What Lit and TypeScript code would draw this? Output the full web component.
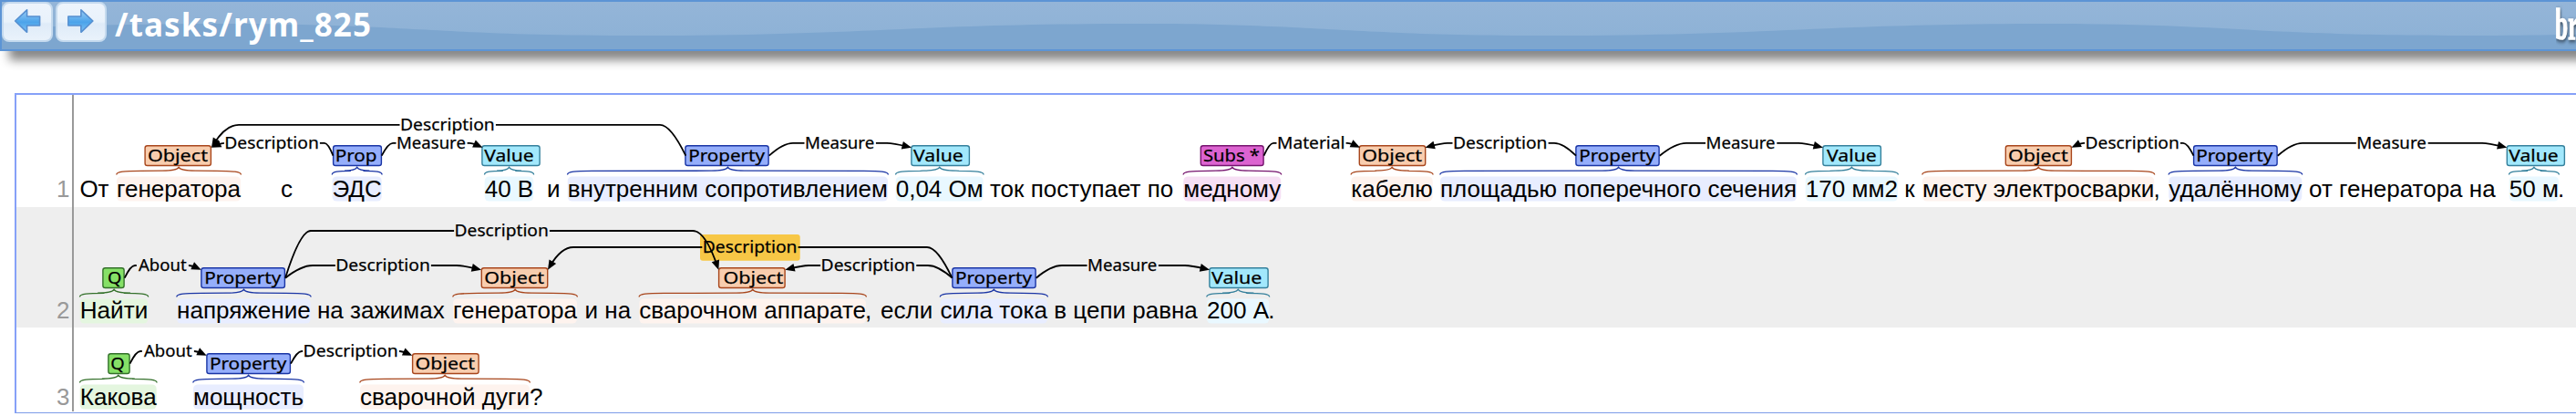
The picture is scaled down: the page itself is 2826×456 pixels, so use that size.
import { LitElement, html, svg, css } from "lit";
import { customElement, property } from "lit/decorators.js";

type Kind = "object" | "property" | "value" | "subs" | "question";

/** label, kind, box left/right, label ink left/right, span left/right, annotated text */
type Entity = [string, Kind, number, number, number, number, number, number, string];

/** plain text and its start */
type Plain = [number, string];

interface Arc {
  label: string;
  y: number;
  /** label ink extent */
  l0: number;
  l1: number;
  /** source edge and the x where its curve becomes flat */
  src: number;
  srcFlat: number;
  /** target edge and the x where its curve becomes flat */
  dst: number;
  dstFlat: number;
  marked?: boolean;
}

interface Sentence {
  no: number;
  top: number;
  height: number;
  box: number;
  base: number;
  shaded: boolean;
  entities: Entity[];
  plain: Plain[];
  arcs: Arc[];
}

const arc = (
  label: string, y: number, l0: number, l1: number,
  src: number, srcFlat: number, dst: number, dstFlat: number, marked = false,
): Arc => ({ label, y, l0, l1, src, srcFlat, dst, dstFlat, marked });

const FILL: Record<Kind, [string, string, string]> = {
  object: ["#f8cdae", "#a8461c", "#fef3ee"],
  property: ["#95aefb", "#1a35a5", "#e8edff"],
  value: ["#a2e8fc", "#35809c", "#e9f8ff"],
  subs: ["#dc63d0", "#75146e", "#f6dff4"],
  question: ["#86e067", "#33702a", "#e4f6df"],
};

const SENTENCES: Sentence[] = [
  {
    no: 1, top: 104, height: 123, box: 159, base: 216, shaded: false,
    entities: [
      ["Object", "object", 158.5, 232, 163, 227, 128, 264, "генератора"],
      ["Prop", "property", 365, 419, 369.5, 412.5, 364.5, 418.7, "ЭДС"],
      ["Value", "value", 528.3, 592.7, 531.3, 584.7, 531.7, 585.2, "40 В"],
      ["Property", "property", 751.3, 843.7, 757, 839, 622.7, 974, "внутренним сопротивлением"],
      ["Value", "value", 999.3, 1064, 1002, 1055.7, 982.7, 1078.7, "0,04 Ом"],
      ["Subs *", "subs", 1316.7, 1386.7, 1321, 1381, 1298.3, 1405.3, "медному"],
      ["Object", "object", 1490.7, 1564.3, 1495.3, 1559, 1482.3, 1571.7, "кабелю"],
      ["Property", "property", 1728.3, 1820.7, 1734, 1816, 1580, 1971, "площадью поперечного сечения"],
      ["Value", "value", 1999.3, 2064, 2004, 2057.7, 1980.7, 2082, "170 мм2"],
      ["Object", "object", 2199.7, 2273, 2204, 2267.7, 2109, 2363.3, "месту электросварки"],
      ["Property", "property", 2406, 2498.7, 2411, 2493.3, 2379.3, 2525.3, "удалённому"],
      ["Value", "value", 2749.7, 2814, 2752.3, 2805.7, 2752.7, 2807, "50 м"],
    ],
    plain: [
      [87.4, "От"], [308, "с"], [600, "и"], [1086, "ток поступает по"], [2089.3, "к"],
      [2362.5, ","], [2533, "от генератора на"], [2806, "."],
    ],
    arcs: [
      arc("Description", 136.8, 440.7, 541.3, 752.3, 724, 232, 262),
      arc("Description", 156.8, 248, 348.3, 365.5, 356, 232, 246),
      arc("Measure", 156.8, 436.7, 510, 418.7, 431, 529.5, 515),
      arc("Measure", 156.8, 884.7, 958.3, 843.7, 870, 1000, 973),
      arc("Material", 156.8, 1402.7, 1474, 1386.5, 1397, 1492, 1478),
      arc("Description", 156.8, 1595.7, 1696, 1729, 1705, 1563.5, 1588),
      arc("Measure", 156.8, 1873.3, 1946.7, 1820.7, 1850, 2000, 1973),
      arc("Description", 156.8, 2289.3, 2389.3, 2406.5, 2395, 2272.5, 2286),
      arc("Measure", 156.8, 2587, 2661, 2498.7, 2526, 2750.3, 2723),
    ],
  },
  {
    no: 2, top: 227, height: 132, box: 293, base: 349.2, shaded: true,
    entities: [
      ["Q", "question", 112.3, 136.7, 119, 132.3, 87.7, 162.3, "Найти"],
      ["Property", "property", 220.3, 313, 226, 308.3, 194, 340.7, "напряжение"],
      ["Object", "object", 527.7, 601.3, 532.3, 596, 497, 633, "генератора"],
      ["Object", "object", 788, 861.7, 794.7, 858.3, 701.3, 950, "сварочном аппарате"],
      ["Property", "property", 1044.3, 1136.7, 1049.7, 1132, 1031.5, 1149, "сила тока"],
      ["Value", "value", 1326.3, 1391.7, 1329, 1383.3, 1324, 1392.3, "200 А"],
    ],
    plain: [
      [348, "на зажимах"], [641.6, "и на"], [949, ","], [966, "если"],
      [1156.3, "в цепи равна"], [1391.3, "."],
    ],
    arcs: [
      arc("About", 291, 152, 204.3, 136.7, 148, 220.7, 207),
      arc("Description", 271, 772.5, 873, 1044.5, 1017, 601, 629, true),
      arc("Description", 253, 500.3, 600.3, 313, 341, 788.3, 760),
      arc("Description", 291, 370, 470.3, 313, 343, 528, 501),
      arc("Description", 291, 902.3, 1002.7, 1044.5, 1018, 861.3, 887),
      arc("Measure", 291, 1194.7, 1268.3, 1136.7, 1165, 1327, 1300),
    ],
  },
  {
    no: 3, top: 359, height: 92, box: 387, base: 444, shaded: false,
    entities: [
      ["Q", "question", 118.3, 142.7, 122.3, 135.7, 87.7, 171.7, "Какова"],
      ["Property", "property", 226.3, 319, 231.7, 314.3, 212, 333, "мощность"],
      ["Object", "object", 452, 525.7, 456.7, 520, 395, 581, "сварочной дуги"],
    ],
    plain: [[581, "?"]],
    arcs: [
      arc("About", 385, 158, 210.3, 142.5, 154, 226.7, 213),
      arc("Description", 385, 334.3, 435.3, 319, 331, 452.3, 438),
    ],
  },
];

@customElement("annotated-sentence")
export class AnnotatedSentence extends LitElement {
  @property({ attribute: false }) data!: Sentence;

  static styles = css`
    :host { display: block; }
    svg { display: block; }
    .text { font: 26px "Liberation Sans", Arial, sans-serif; white-space: pre; fill: #000; }
    .number { fill: #999; text-anchor: end; }
    .label {
      font: 400 18.6px "Noto Sans", "Open Sans", sans-serif;
      fill: #000;
      stroke: #000;
      stroke-width: 0.25px;
    }
    .box { stroke-width: 1.4; }
    .brace { fill: none; stroke-width: 1.3; }
    .arc { fill: none; stroke: #000; stroke-width: 1.8; }
  `;

  private span(e: Entity) {
    const { box, base } = this.data;
    const [, kind, , , , , s0, s1, text] = e;
    return svg`
      <rect x=${s0} y=${box + 34.4} width=${s1 - s0} height="27.2" rx="5" fill=${FILL[kind][2]}></rect>
      <text class="text" x=${s0} y=${base} textLength=${s1 - s0} lengthAdjust="spacingAndGlyphs">${text}</text>`;
  }

  private tag(e: Entity) {
    const b = this.data.box;
    const [label, kind, x0, x1, t0, t1, s0, s1] = e;
    const [fill, stroke] = FILL[kind];
    const a = s0 - 0.2;
    const z = s1 + 0.4;
    const m = (a + z) / 2;
    const r = Math.min(18, (z - a) / 4);
    const lead = label[0] === "V" ? 0 : label[0] === "P" ? 1.8 : 1.1;
    const trail = label[0] === "P" && label.length > 4 ? 0 : 1;
    const brace =
      `M${a} ${b + 32.6} C${a} ${b + 29} ${a + r / 2} ${b + 28.6} ${a + r * 1.5} ${b + 28.4}` +
      ` L${m - r} ${b + 28.2} Q${m - 2} ${b + 28} ${m} ${b + 24.4}` +
      ` Q${m + 2} ${b + 28} ${m + r} ${b + 28.2}` +
      ` L${z - r * 1.5} ${b + 28.4} C${z - r / 2} ${b + 28.6} ${z} ${b + 29} ${z} ${b + 32.6}`;
    return svg`
      <path class="brace" stroke=${stroke} d=${brace}></path>
      <rect class="box" x=${x0 + 0.6} y=${b + 0.7} width=${x1 - x0 - 1.2} height="21.8" rx="2.6"
        fill=${fill} stroke=${stroke}></rect>
      <text class="label" x=${t0 - lead} y=${b + 17.6}
        textLength=${t1 - t0 + lead + trail} lengthAdjust="spacingAndGlyphs">${label}</text>`;
  }

  private link(a: Arc) {
    const b = this.data.box;
    const fromLeft = a.src < a.dst;
    const srcGap = fromLeft ? a.l0 - 2.2 : a.l1 + 2.6;
    const dstGap = fromLeft ? a.l1 + 2.6 : a.l0 - 2.2;
    const srcCtl = a.srcFlat + (a.src - a.srcFlat) * 0.42;
    const sy = b + 11.7;
    const ty = b + 2.8;
    const flat = a.y > b - 5;
    const dstCtl = a.dstFlat + (a.dst - a.dstFlat) * (flat ? 0.25 : 0.48);
    const dx = a.dst - dstCtl;
    const dy = ty - a.y;
    const len = Math.hypot(dx, dy);
    const ux = dx / len;
    const uy = dy / len;
    const bx = a.dst - ux * 10.5;
    const by = ty - uy * 10.5;
    const head =
      `M${a.dst} ${ty} L${bx - uy * 4.4} ${by + ux * 4.4}` +
      ` L${bx + uy * 4.4} ${by - ux * 4.4} Z`;
    const lead = a.label === "About" ? 0.1 : 1.7;
    const trail = a.label === "Description" || a.label === "Material" ? 1.5 : a.label === "About" ? 0.3 : 0.9;
    return svg`
      ${a.marked
        ? svg`<rect x="768" y=${a.y - 14} width="109.7" height="28.8" rx="3" fill="#f7c746"></rect>`
        : null}
      <path class="arc" d="M${a.src} ${sy} Q${srcCtl} ${a.y} ${a.srcFlat} ${a.y} L${srcGap} ${a.y}"></path>
      <path class="arc" d="M${dstGap} ${a.y} L${a.dstFlat} ${a.y} Q${dstCtl} ${a.y} ${a.dst - ux * 5} ${ty - uy * 5}"></path>
      <path d=${head}></path>
      <text class="label" x=${a.l0 - lead} y=${a.y + 6.4}
        textLength=${a.l1 - a.l0 + lead + trail} lengthAdjust="spacingAndGlyphs">${a.label}</text>`;
  }

  render() {
    const d = this.data;
    return html`<svg width="2808" height=${d.height} viewBox="18 ${d.top} 2808 ${d.height}">
      <rect x="18" y=${d.top} width="2808" height=${d.height} fill=${d.shaded ? "#eeeeee" : "#ffffff"}></rect>
      <rect x="79" y=${d.top} width="2" height=${d.height} fill="#999"></rect>
      <text class="text number" x="76.4" y=${d.base}>${d.no}</text>
      ${d.entities.map((e) => this.span(e))}
      ${d.plain.map(([x, t]) => svg`<text class="text" x=${x} y=${d.base}>${t}</text>`)}
      ${d.entities.map((e) => this.tag(e))}
      ${d.arcs.map((a) => this.link(a))}
    </svg>`;
  }
}

@customElement("app-root")
export class AppRoot extends LitElement {
  static styles = css`
    :host {
      display: block;
      width: 2826px;
      height: 456px;
      overflow: hidden;
      background: #fff;
    }
    .header {
      box-sizing: border-box;
      display: grid;
      grid-template: 52px / 1fr;
      width: 2846px;
      height: 56px;
      border: 2px solid #5c94d5;
      background: #7da6cf;
      box-shadow: 10px 10px 10px #888;
    }
    .wave, .bar { grid-area: 1 / 1; min-width: 0; }
    .wave { display: block; width: 2842px; height: 52px; }
    .bar { display: flex; align-items: flex-start; }
    .nav {
      box-sizing: border-box;
      width: 55.5px;
      height: 43.5px;
      margin-right: 3.5px;
      padding: 0;
      border: 2px solid #c5daee;
      border-radius: 8px;
      background: linear-gradient(#edf4fc 0%, #e9f2fb 50%, #dfebf8 55%, #e9f2fb 100%);
      display: flex;
    }
    .nav svg { display: block; width: 51.5px; height: 39.5px; }
    .title { display: block; width: 320px; height: 52px; margin-left: 3px; }
    .title text { font: 700 35px "Noto Sans", "Open Sans", sans-serif; fill: #fff; }
    .logo { display: block; width: 70px; height: 52px; margin-left: auto; margin-right: -30px; }
    .logo text {
      font: 700 49px "Liberation Serif", serif;
      fill: #fff;
      stroke: #fff;
      stroke-width: 1.6px;
      filter: drop-shadow(1px 2px 2px #345);
    }
    .frame {
      box-sizing: border-box;
      margin: 46px 0 0 16px;
      width: 2830px;
      height: 351px;
      border: 2px solid #86a1f8;
      border-bottom: 1px solid #7d9ce8;
    }
  `;

  private arrow(right: boolean) {
    return svg`<g transform=${right ? "matrix(-1 0 0 1 51.5 0)" : ""}>
      <path d="M12.6 19 L25.6 6.8 V14 H39.6 V24 H25.6 V31.3 Z" fill="url(#g)"
        stroke="#568fd0" stroke-width="1.6" stroke-linejoin="round"></path>
    </g>`;
  }

  private nav(right: boolean) {
    return html`<button class="nav" aria-label=${right ? "next" : "previous"}>
      <svg viewBox="0 0 51.5 39.5">
        <defs>
          <linearGradient id="g" x1="0" y1="0" x2="0" y2="1">
            <stop offset="0" stop-color="#9ccdf5"></stop>
            <stop offset=".55" stop-color="#4ba3ea"></stop>
            <stop offset="1" stop-color="#7fc3f5"></stop>
          </linearGradient>
        </defs>
        ${this.arrow(right)}
      </svg>
    </button>`;
  }

  render() {
    let crest = "M-757 24";
    for (let i = -1; i < 3; i++) {
      const o = i * 1000 + 243;
      crest += ` C${o + 200} 24 ${o + 235} 37 ${o + 455} 37 C${o + 700} 37 ${o + 760} 24 ${o + 1000} 24`;
    }
    return html`
      <div class="header">
        <svg class="wave" viewBox="0 0 2842 52">
          <defs>
            <linearGradient id="top" x1="0" y1="0" x2="0" y2="1">
              <stop offset="0" stop-color="#94b5d8"></stop>
              <stop offset="1" stop-color="#8eb2d6"></stop>
            </linearGradient>
          </defs>
          <path d="${crest} V0 H-757 Z" fill="url(#top)"></path>
        </svg>
        <div class="bar">
          ${this.nav(false)}${this.nav(true)}
          <svg class="title" viewBox="0 0 320 52">
            <text x="3" y="38" textLength="281" lengthAdjust="spacing">/tasks/rym_825</text>
          </svg>
          <svg class="logo" viewBox="0 0 70 52">
            <text transform="translate(-1 41) scale(.52 1)">br</text>
          </svg>
        </div>
      </div>
      <div class="frame">
        ${SENTENCES.map((s) => html`<annotated-sentence .data=${s}></annotated-sentence>`)}
      </div>
    `;
  }
}
